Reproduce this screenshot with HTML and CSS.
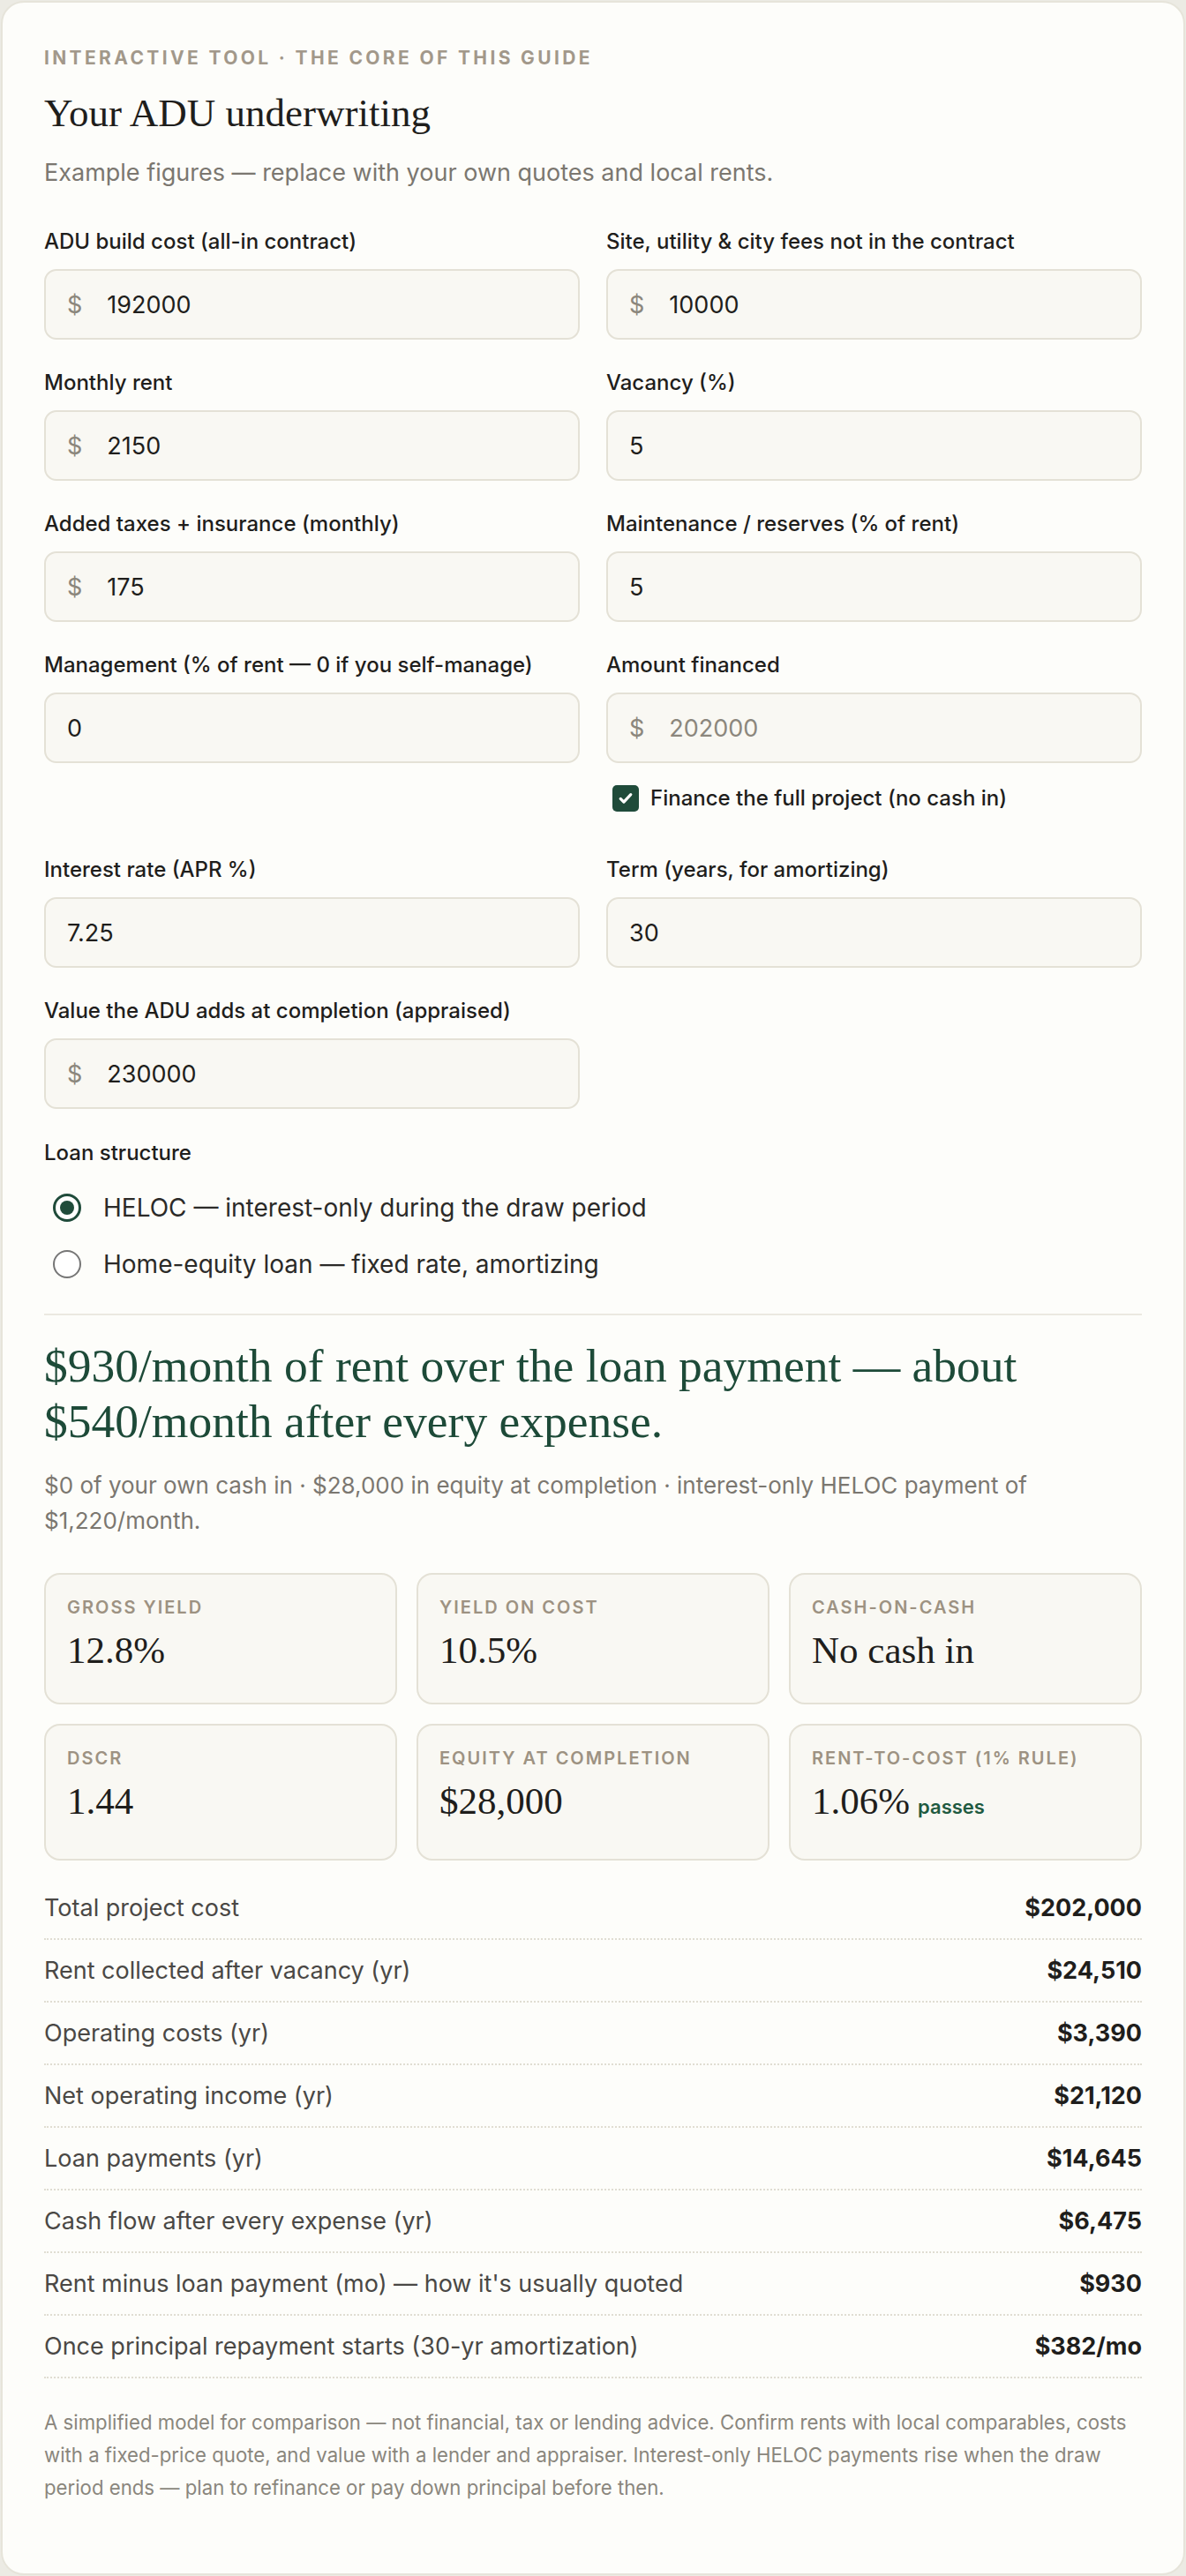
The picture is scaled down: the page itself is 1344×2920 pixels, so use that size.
FILE: index.html
```html
<!DOCTYPE html>
<html lang="en">
<head>
<meta charset="utf-8">
<title>Your ADU underwriting</title>
<link rel="stylesheet" href="styles.css">
</head>
<body>
<section class="tool">
  <p class="eyebrow">Interactive tool · The core of this guide</p>
  <h2 class="title">Your ADU underwriting</h2>
  <p class="intro">Example figures — replace with your own quotes and local rents.</p>

  <div class="inputs">
    <div class="field">
      <label class="field-label" for="build">ADU build cost (all-in contract)</label>
      <div class="control"><span class="prefix">$</span><input class="value" id="build" type="text" value="192000"></div>
    </div>
    <div class="field">
      <label class="field-label" for="fees">Site, utility &amp; city fees not in the contract</label>
      <div class="control"><span class="prefix">$</span><input class="value" id="fees" type="text" value="10000"></div>
    </div>

    <div class="field">
      <label class="field-label" for="rent">Monthly rent</label>
      <div class="control"><span class="prefix">$</span><input class="value" id="rent" type="text" value="2150"></div>
    </div>
    <div class="field">
      <label class="field-label" for="vacancy">Vacancy (%)</label>
      <div class="control"><input class="value" id="vacancy" type="text" value="5"></div>
    </div>

    <div class="field">
      <label class="field-label" for="taxes">Added taxes + insurance (monthly)</label>
      <div class="control"><span class="prefix">$</span><input class="value" id="taxes" type="text" value="175"></div>
    </div>
    <div class="field">
      <label class="field-label" for="reserves">Maintenance / reserves (% of rent)</label>
      <div class="control"><input class="value" id="reserves" type="text" value="5"></div>
    </div>

    <div class="field">
      <label class="field-label" for="mgmt">Management (% of rent — 0 if you self-manage)</label>
      <div class="control"><input class="value" id="mgmt" type="text" value="0"></div>
    </div>
    <div class="field">
      <label class="field-label" for="financed">Amount financed</label>
      <div class="control is-disabled"><span class="prefix">$</span><input class="value" id="financed" type="text" value="202000" disabled></div>
      <label class="check">
        <span class="checkbox" aria-hidden="true">
          <svg viewBox="0 0 20 20" width="20" height="20"><path d="M4.2 10.4l3.7 3.7 7.9-8.4" fill="none" stroke="#fff" stroke-width="3.2" stroke-linecap="round" stroke-linejoin="round"/></svg>
        </span>
        Finance the full project (no cash in)
      </label>
    </div>

    <div class="field">
      <label class="field-label" for="rate">Interest rate (APR %)</label>
      <div class="control"><input class="value" id="rate" type="text" value="7.25"></div>
    </div>
    <div class="field">
      <label class="field-label" for="term">Term (years, for amortizing)</label>
      <div class="control"><input class="value" id="term" type="text" value="30"></div>
    </div>

    <div class="field">
      <label class="field-label" for="appraised">Value the ADU adds at completion (appraised)</label>
      <div class="control"><span class="prefix">$</span><input class="value" id="appraised" type="text" value="230000"></div>
    </div>
  </div>

  <div class="structure" role="radiogroup" aria-label="Loan structure">
    <p class="structure-label">Loan structure</p>
    <div class="options">
      <div class="option"><span class="radio is-on"></span>HELOC — interest-only during the draw period</div>
      <div class="option"><span class="radio"></span>Home-equity loan — fixed rate, amortizing</div>
    </div>
  </div>

  <div class="result">
    <p class="headline">$930/month of rent over the loan payment — about $540/month after every expense.</p>
    <p class="summary">$0 of your own cash in · $28,000 in equity at completion · interest-only HELOC payment of $1,220/month.</p>

    <div class="metrics">
      <div class="metric"><p class="metric-label">Gross yield</p><p class="metric-value">12.8%</p></div>
      <div class="metric"><p class="metric-label">Yield on cost</p><p class="metric-value">10.5%</p></div>
      <div class="metric"><p class="metric-label">Cash-on-cash</p><p class="metric-value">No cash in</p></div>
      <div class="metric"><p class="metric-label">DSCR</p><p class="metric-value">1.44</p></div>
      <div class="metric"><p class="metric-label">Equity at completion</p><p class="metric-value">$28,000</p></div>
      <div class="metric"><p class="metric-label">Rent-to-cost (1% rule)</p><p class="metric-value">1.06%<span class="pass">passes</span></p></div>
    </div>

    <dl class="breakdown">
      <div class="row"><dt>Total project cost</dt><dd>$202,000</dd></div>
      <div class="row"><dt>Rent collected after vacancy (yr)</dt><dd>$24,510</dd></div>
      <div class="row"><dt>Operating costs (yr)</dt><dd>$3,390</dd></div>
      <div class="row"><dt>Net operating income (yr)</dt><dd>$21,120</dd></div>
      <div class="row"><dt>Loan payments (yr)</dt><dd>$14,645</dd></div>
      <div class="row"><dt>Cash flow after every expense (yr)</dt><dd>$6,475</dd></div>
      <div class="row"><dt>Rent minus loan payment (mo) — how it's usually quoted</dt><dd>$930</dd></div>
      <div class="row"><dt>Once principal repayment starts (30-yr amortization)</dt><dd>$382/mo</dd></div>
    </dl>

    <p class="note">A simplified model for comparison — not financial, tax or lending advice. Confirm rents with local comparables, costs with a fixed-price quote, and value with a lender and appraiser. Interest-only HELOC payments rise when the draw period ends — plan to refinance or pay down principal before then.</p>
  </div>
</section>
</body>
</html>
```

FILE: styles.css
```css
* {
  box-sizing: border-box;
}

html,
body {
  margin: 0;
}

body {
  background: #ecebe4;
  padding: 1px;
  font-family: Inter, "Noto Sans", "Liberation Sans", sans-serif;
  color: #1f1e1c;
}

p {
  margin: 0;
}

/* Card */
.tool {
  min-height: 2918px;
  background: #fdfdfa;
  border: 2px solid #e6e4da;
  border-radius: 26px;
  padding: 47px;
}

.eyebrow {
  font-size: 21px;
  line-height: 31px;
  font-weight: 700;
  letter-spacing: 0.16em;
  text-transform: uppercase;
  color: #a2988a;
}

.title {
  margin: 22px 0 0;
  font-family: "Liberation Serif", "Times New Roman", serif;
  font-size: 45px;
  line-height: 50px;
  font-weight: 400;
  color: #1f1e1c;
}

.intro {
  margin-top: 23px;
  font-size: 27px;
  line-height: 39px;
  color: #7b7770;
}

/* Input grid */
.inputs {
  margin-top: 42px;
  display: grid;
  grid-template-columns: 1fr 1fr;
  column-gap: 30px;
  row-gap: 32px;
}

.field {
  display: flex;
  flex-direction: column;
  gap: 14px;
  min-width: 0;
}

.field-label {
  font-size: 24px;
  line-height: 34px;
  font-weight: 500;
  color: #1f1e1c;
}

.control {
  height: 80px;
  display: flex;
  align-items: center;
  gap: 28px;
  padding: 0 24px;
  background: #f9f8f3;
  border: 2px solid #e4e1d6;
  border-radius: 14px;
  font-size: 27px;
}

.prefix {
  color: #8c877d;
}

.value {
  flex: 1;
  min-width: 0;
  border: 0;
  padding: 0;
  margin: 0;
  background: transparent;
  font: inherit;
  color: #1f1e1c;
  outline: none;
}

.is-disabled .value {
  color: #8c877d;
  -webkit-text-fill-color: #8c877d;
  opacity: 1;
}

.check {
  display: flex;
  align-items: center;
  gap: 13px;
  min-height: 40px;
  margin: 6px 0 12px 7px;
  font-size: 24px;
  line-height: 34px;
  font-weight: 500;
  color: #1f1e1c;
}

.checkbox {
  width: 30px;
  height: 30px;
  flex: none;
  display: grid;
  place-items: center;
  background: #1f4b3a;
  border-radius: 5px;
}

/* Loan structure */
.structure {
  margin-top: 33px;
}

.structure-label {
  font-size: 24px;
  line-height: 34px;
  font-weight: 500;
}

.options {
  margin-top: 24px;
  display: flex;
  flex-direction: column;
  gap: 22px;
}

.option {
  display: flex;
  align-items: center;
  gap: 25px;
  height: 42px;
  padding-left: 10px;
  font-size: 28px;
  line-height: 42px;
  color: #2b2a28;
}

.radio {
  width: 32px;
  height: 32px;
  flex: none;
  border-radius: 50%;
  border: 2.5px solid #767676;
  background: #fff;
  display: grid;
  place-items: center;
}

.radio.is-on {
  border: 3px solid #1f4b3a;
}

.radio.is-on::after {
  content: "";
  width: 16px;
  height: 16px;
  border-radius: 50%;
  background: #1f4b3a;
}

/* Result */
.result {
  margin-top: 35px;
  border-top: 2px solid #ebe9e0;
  padding-top: 26px;
}

.headline {
  font-family: "Liberation Serif", "Times New Roman", serif;
  font-size: 53.5px;
  line-height: 63px;
  color: #1d4a38;
}

.summary {
  margin-top: 21px;
  font-size: 26px;
  line-height: 40px;
  color: #7b7770;
}

.metrics {
  margin-top: 39px;
  display: grid;
  grid-template-columns: repeat(3, 1fr);
  gap: 22px;
}

.metric {
  background: #f9f8f3;
  border: 2px solid #e4e1d6;
  border-radius: 18px;
  padding: 23px 24px 34px;
}

.metric-label {
  font-size: 20px;
  line-height: 28px;
  font-weight: 600;
  letter-spacing: 0.1em;
  text-transform: uppercase;
  color: #9d9282;
}

.metric-value {
  margin-top: 10px;
  font-family: "Liberation Serif", "Times New Roman", serif;
  font-size: 43px;
  line-height: 50px;
  color: #1f1e1c;
}

.pass {
  margin-left: 9px;
  font-family: Inter, "Noto Sans", sans-serif;
  font-size: 22px;
  font-weight: 600;
  color: #1f5a40;
}

.breakdown {
  margin: 19px 0 0;
}

.row {
  display: flex;
  justify-content: space-between;
  align-items: baseline;
  padding: 16.5px 0;
  border-bottom: 2px dotted #e0ddd2;
  font-size: 27px;
  line-height: 36px;
}

.row dt {
  color: #4a4845;
}

.row dd {
  margin: 0;
  font-weight: 700;
  color: #1f1e1c;
}

.note {
  margin-top: 31px;
  font-size: 22.2px;
  line-height: 37px;
  color: #8a867d;
}
```
